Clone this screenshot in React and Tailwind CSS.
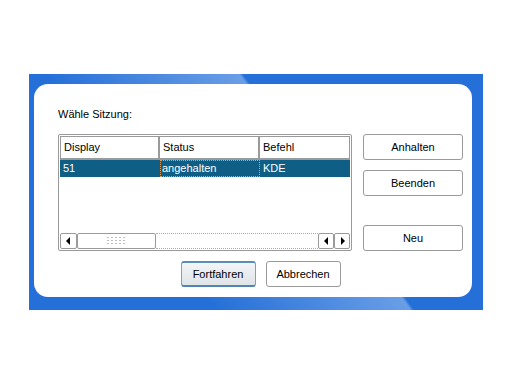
import React from "react";

function Btn({ children, className = "" }) {
  return (
    <div
      className={
        "flex items-center justify-center rounded-[3px] border border-[#9a9a9a] bg-white text-[11px] text-black " +
        className
      }
    >
      {children}
    </div>
  );
}

function Arrow({ dir }) {
  return (
    <svg width="5" height="8" viewBox="0 0 5 8">
      {dir === "left" ? (
        <polygon points="4,0 4,8 0,4" fill="#000" />
      ) : (
        <polygon points="1,0 1,8 5,4" fill="#000" />
      )}
    </svg>
  );
}

function Grip() {
  const dots = [];
  for (let r = 0; r < 3; r++) {
    for (let c = 0; c < 5; c++) {
      dots.push(<rect key={r + "-" + c} x={c * 4} y={r * 3} width="2" height="1" fill="#bdbdbd" />);
    }
  }
  return (
    <svg width="19" height="8" viewBox="0 0 19 8">
      {dots}
    </svg>
  );
}

export default function App() {
  return (
    <div
      className="w-[512px] h-[384px] bg-white overflow-hidden pt-[74px] pl-[29px]"
      style={{ fontFamily: '"Liberation Sans", Arial, sans-serif' }}
    >
      <div className="w-[454px] h-[236px] pt-[10px] pl-[5px] bg-[linear-gradient(54deg,#2570d8_0%,#2570d8_30%,#6a9ee6_61%,#2570d8_61.6%,#2570d8_100%)]">
        <div className="w-[438px] h-[213px] bg-white rounded-[14px] pt-[24px] pl-[24px] flex flex-col">
          <div className="h-[13px] leading-[13px] text-[11px] text-black">Wähle Sitzung:</div>
          <div className="mt-[13px] flex gap-[11px]">
            {/* list box */}
            <div className="w-[294px] h-[117px] rounded-[2px] border border-[#9a9a9a] bg-white p-px flex flex-col">
              <div className="flex h-[24px]">
                <div className="w-[100px] h-[24px] border border-[#9a9a9a] border-r-2 border-b-2 flex items-center pl-[3px] text-[11px]">Display</div>
                <div className="w-[100px] h-[24px] border border-[#9a9a9a] border-l-0 border-r-2 border-b-2 flex items-center pl-[3px] text-[11px]">Status</div>
                <div className="flex-1 h-[24px] border border-[#9a9a9a] border-l-0 border-b-2 flex items-center pl-[3px] text-[11px]">Befehl</div>
              </div>
              <div className="flex h-[17px] bg-[#0f5e86] text-white text-[11px]">
                <div className="w-[100px] flex items-center pl-[3px]">51</div>
                <div className="w-[100px] flex items-center pl-px border border-dotted border-[#e0a060]">angehalten</div>
                <div className="flex-1 flex items-center pl-[3px]">KDE</div>
              </div>
              <div className="flex-1" />
              <div className="flex h-[16px] items-stretch">
                <div className="w-[17px] rounded-[2px] border border-[#9a9a9a] flex items-center justify-center">
                  <Arrow dir="left" />
                </div>
                <div className="w-[79px] rounded-[2px] border border-[#9a9a9a] flex items-center justify-center">
                  <Grip />
                </div>
                <div className="flex-1 border-t border-b border-dotted border-[#b0b0b0]" />
                <div className="w-[16px] rounded-[2px] border border-[#9a9a9a] flex items-center justify-center">
                  <Arrow dir="left" />
                </div>
                <div className="w-[16px] rounded-[2px] border border-[#9a9a9a] flex items-center justify-center">
                  <Arrow dir="right" />
                </div>
              </div>
            </div>
            {/* right buttons */}
            <div className="w-[100px] flex flex-col">
              <Btn className="h-[26px]">Anhalten</Btn>
              <Btn className="h-[26px] mt-[10px]">Beenden</Btn>
              <Btn className="h-[26px] mt-[29px]">Neu</Btn>
            </div>
          </div>
          <div className="mt-[10px] w-[405px] flex justify-center gap-[10px]">
            <div className="w-[75px] h-[26px] rounded-[3px] border border-[#9a9a9a] border-t-2 border-b-2 border-t-[#5a8fb3] border-b-[#4f86ad] bg-[linear-gradient(#f3f5f7,#dfe4e8)] flex items-center justify-center text-[11px] text-black">
              Fortfahren
            </div>
            <Btn className="w-[75px] h-[26px]">Abbrechen</Btn>
          </div>
        </div>
      </div>
    </div>
  );
}
